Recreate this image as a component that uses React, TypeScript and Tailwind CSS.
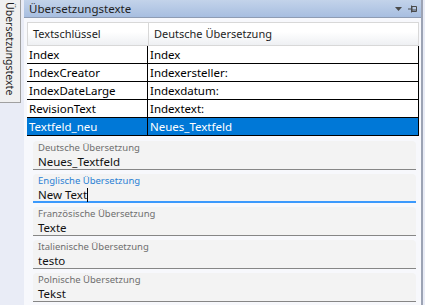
import React from "react";

const rows = [
  { key: "Index", de: "Index" },
  { key: "IndexCreator", de: "Indexersteller:" },
  { key: "IndexDateLarge", de: "Indexdatum:" },
  { key: "RevisionText", de: "Indextext:" },
  { key: "Textfeld_neu", de: "Neues_Textfeld", selected: true },
];

const fields = [
  { label: "Deutsche Übersetzung", value: "Neues_Textfeld" },
  { label: "Englische Übersetzung", value: "New Text", focused: true },
  { label: "Französische Übersetzung", value: "Texte" },
  { label: "Italienische Übersetzung", value: "testo" },
  { label: "Polnische Übersetzung", value: "Tekst" },
];

export default function App() {
  return (
    <div
      className="flex w-[425px] h-[305px] overflow-hidden bg-[#e9ecf6] text-black"
      style={{ fontFamily: '"Noto Sans", "Open Sans", sans-serif' }}
    >
      {/* Seitenreiter */}
      <div className="w-[24px] shrink-0">
        <div className="w-[21px] h-[103px] bg-[#f0f0f0] border-r border-b border-[#a0a0a0] flex justify-center pt-[2px]">
          <span className="text-[10.5px] leading-[20px] text-[#1e1e1e] whitespace-nowrap [writing-mode:vertical-rl] [text-orientation:sideways]">
            Übersetzungstexte
          </span>
        </div>
      </div>

      {/* Panel */}
      <div className="w-[399px] shrink-0 flex flex-col bg-[#f7f8fc] border-r-2 border-[#9ca3b4]">
        <div className="h-[18px] flex items-center justify-between bg-gradient-to-b from-[#c3d3ea] to-[#a7bee0] border-b border-[#8e9cb3] pl-[5px] pr-[4px]">
          <span className="text-[11.5px] leading-none text-[#1e1e1e]">Übersetzungstexte</span>
          <div className="flex items-center gap-[6px]">
            <svg width="7" height="4" viewBox="0 0 7 4">
              <path d="M0 0h7L3.5 4z" fill="#4a4a4a" />
            </svg>
            <svg width="9" height="8" viewBox="0 0 9 8">
              <path d="M0 4h3M3.5 0.5v7" stroke="#4a4a4a" strokeWidth="1" fill="none" />
              <path d="M4 1.5h4.5v5H4z" stroke="#4a4a4a" strokeWidth="1" fill="none" />
              <path d="M4 5h4" stroke="#4a4a4a" strokeWidth="1" />
            </svg>
          </div>
        </div>

        <div className="flex-1 pt-[4px] pl-[3px] pr-[2px]">
          {/* Tabelle */}
          <div className="bg-white">
            <div className="flex h-[24px] bg-gradient-to-b from-white from-40% to-[#eef0f3] border border-[#d8d8d8] text-[11px] text-[#1e1e1e]">
              <div className="w-[121px] shrink-0 border-r border-[#d8d8d8] flex items-center pl-[5px]">
                Textschlüssel
              </div>
              <div className="flex-1 flex items-center pl-[5px]">Deutsche Übersetzung</div>
            </div>
            {rows.map((r) => (
              <div
                key={r.key}
                className={`flex h-[18px] border-b border-r border-black text-[11.5px] leading-[17px] ${
                  r.selected ? "bg-[#0078d7] text-white" : "bg-white text-black"
                }`}
              >
                <div className="w-[121px] shrink-0 border-r border-black pl-[2px]">{r.key}</div>
                <div className="flex-1 pl-[2px]">{r.de}</div>
              </div>
            ))}
          </div>

          {/* Eingabefelder */}
          <div className="flex flex-col gap-[4px] pt-[5px] pl-[6px] pr-[3px]">
            {fields.map((f) => (
              <div
                key={f.label}
                className={`h-[29px] rounded-t-[4px] bg-[#f3f3f3] pl-[5px] pt-[1px] ${
                  f.focused ? "border-b-2 border-[#3b99fc]" : "border-b border-[#868686]"
                }`}
              >
                <div className={`text-[9.5px] leading-[12px] ${f.focused ? "text-[#2a7fd4]" : "text-[#6e6e6e]"}`}>
                  {f.label}
                </div>
                <div className="text-[11.5px] leading-[15px] text-[#111]">
                  {f.value}
                  {f.focused && <span className="inline-block w-px h-[14px] bg-black align-[-3px]" />}
                </div>
              </div>
            ))}
          </div>
        </div>
      </div>
    </div>
  );
}
